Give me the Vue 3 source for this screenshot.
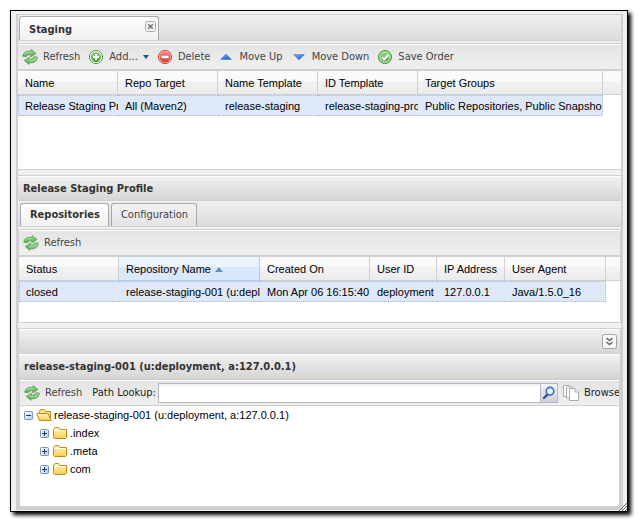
<script setup>
import { ref } from 'vue'

const profileColumns = ['Name', 'Repo Target', 'Name Template', 'ID Template', 'Target Groups']
const profiles = [
  ['Release Staging Profile', 'All (Maven2)', 'release-staging', 'release-staging-profile', 'Public Repositories, Public Snapshots'],
]

const repoColumns = ['Status', 'Repository Name', 'Created On', 'User ID', 'IP Address', 'User Agent']
const repos = [
  ['closed', 'release-staging-001 (u:deployment, a:127.0.0.1)', 'Mon Apr 06 16:15:40', 'deployment', '127.0.0.1', 'Java/1.5.0_16'],
]

const folders = ['.index', '.meta', 'com']
const open = ref(true)
const path = ref('')
</script>

<template>
  <svg class="defs" aria-hidden="true">
    <defs>
      <linearGradient id="g-green" x1="0" y1="0" x2="0" y2="1">
        <stop offset="0" stop-color="#9ad48c" /><stop offset="1" stop-color="#4fa845" />
      </linearGradient>
      <linearGradient id="g-red" x1="0" y1="0" x2="0" y2="1">
        <stop offset="0" stop-color="#f08a80" /><stop offset="1" stop-color="#d43a30" />
      </linearGradient>
      <linearGradient id="g-blue" x1="0" y1="0" x2="1" y2="1">
        <stop offset="0" stop-color="#7db0f5" /><stop offset="1" stop-color="#1c4fc4" />
      </linearGradient>
      <linearGradient id="g-folder" x1="0" y1="0" x2="0" y2="1">
        <stop offset="0" stop-color="#fff6c0" /><stop offset="1" stop-color="#f7ce52" />
      </linearGradient>
      <linearGradient id="g-box" x1="0" y1="0" x2="1" y2="1">
        <stop offset="0" stop-color="#ffffff" /><stop offset="1" stop-color="#b9cbe3" />
      </linearGradient>
      <symbol id="i-refresh" viewBox="0 0 16 16">
        <path d="M.8 7.4 C1.2 3.4 4.6 1.6 9 2.4 L9.2 .6 L14 4.4 L8.8 8 L8.8 6 C6.8 5.4 5.2 5.8 4.6 7.6 Z" fill="url(#g-green)" stroke="#4c9a4a" stroke-width=".7" stroke-linejoin="round" />
        <path d="M15.4 8 C15 12.6 11.4 14.4 7.2 13.6 L7 15.4 L2.2 11.6 L7.4 8 L7.3 10 C9.4 10.6 11 10 11.7 7.8 Z" fill="url(#g-green)" stroke="#4c9a4a" stroke-width=".7" stroke-linejoin="round" />
        <path d="M2.5 5.8 C3.8 3.8 6 3.2 9.6 3.9 M13.9 9.4 C12.6 11.8 10 12.4 6.6 11.6" fill="none" stroke="#c6ecbf" stroke-width=".8" />
      </symbol>
      <symbol id="i-add" viewBox="0 0 16 16">
        <circle cx="8" cy="8" r="6.6" fill="#fff" stroke="#4da048" stroke-width="1" />
        <circle cx="8" cy="8" r="5.2" fill="url(#g-green)" />
        <path d="M8 5v6M5 8h6" stroke="#fff" stroke-width="2" />
      </symbol>
      <symbol id="i-delete" viewBox="0 0 16 16">
        <circle cx="8" cy="8" r="6.6" fill="#f6b5ae" stroke="#d8453b" stroke-width="1" />
        <circle cx="8" cy="8" r="5.4" fill="url(#g-red)" />
        <path d="M4.5 8h7" stroke="#fff" stroke-width="2.4" />
      </symbol>
      <symbol id="i-save" viewBox="0 0 16 16">
        <circle cx="8" cy="8" r="6.6" fill="#8fce83" stroke="#4da048" stroke-width="1" />
        <circle cx="8" cy="8" r="5" fill="url(#g-green)" stroke="#d8f2d2" stroke-width=".6" />
        <path d="M5 8.2l2.2 2.2L11.2 6" fill="none" stroke="#fff" stroke-width="2" />
      </symbol>
      <symbol id="i-up" viewBox="0 0 16 16">
        <path d="M8 5L13.4 10.5H2.6Z" fill="url(#g-blue)" stroke="#3c6fd6" stroke-width=".5" />
      </symbol>
      <symbol id="i-down" viewBox="0 0 16 16">
        <path d="M2.6 5.5H13.4L8 11Z" fill="url(#g-blue)" stroke="#3c6fd6" stroke-width=".5" />
      </symbol>
      <symbol id="i-folder" viewBox="0 0 16 16">
        <path d="M1.5 12.5V4.5L3 2.5H6.6L8 4.5H14.5V12.5L13.5 13.5H2.5Z" fill="url(#g-folder)" stroke="#c48a1e" />
        <path d="M2.5 6.5V5.5H13.5" fill="none" stroke="#fffbe0" />
      </symbol>
      <symbol id="i-folder-open" viewBox="0 0 16 16">
        <path d="M3.5 13.5V4.2L4.5 2.5H8.2L9.5 4.5H14.5V13.5Z" fill="#fbe48a" stroke="#c48a1e" />
        <path d="M.8 6.5H12.2L15.2 13.5H3.4Z" fill="url(#g-folder)" stroke="#c48a1e" stroke-linejoin="round" />
      </symbol>
      <symbol id="i-pages" viewBox="0 0 16 16">
        <g fill="#fff" stroke="#a4a4a4" stroke-width=".9">
          <path d="M.5 .5H6L8 2.5V11.5H.5Z" />
          <path d="M3.5 2H9L11 4V13H3.5Z" />
          <path d="M6.5 3.5H12L15.5 7V15.5H6.5Z" />
          <path d="M12 3.5V7H15.5" />
        </g>
      </symbol>
      <symbol id="i-minus" viewBox="0 0 9 9">
        <rect x=".5" y=".5" width="8" height="8" rx="1" fill="url(#g-box)" stroke="#7b93b5" />
        <path d="M2 4.5h5" stroke="#1f3a66" />
      </symbol>
      <symbol id="i-plus" viewBox="0 0 9 9">
        <rect x=".5" y=".5" width="8" height="8" rx="1" fill="url(#g-box)" stroke="#7b93b5" />
        <path d="M2 4.5h5M4.5 2v5" stroke="#1f3a66" />
      </symbol>
    </defs>
  </svg>

  <div class="page">
    <div class="window">
      <main class="panel">
        <div class="strip" role="tablist">
          <div class="tab active closable">
            <button class="tab-label" role="tab" aria-selected="true">Staging</button>
            <button class="close" aria-label="Close">
              <svg viewBox="0 0 11 11"><rect x=".5" y=".5" width="10" height="10" rx="2" fill="#f4f4f4" stroke="#a8a8a8" /><path d="M3.2 3.2l4.6 4.6M7.8 3.2l-4.6 4.6" stroke="#777" stroke-width="1.6" /></svg>
            </button>
          </div>
        </div>
        <div class="base"></div>

        <div class="toolbar thick">
          <button class="tool"><svg class="icon"><use href="#i-refresh" /></svg>Refresh</button>
          <button class="tool"><svg class="icon"><use href="#i-add" /></svg>Add...<svg class="caret" viewBox="0 0 6 4"><path d="M0 0H6L3 4Z" fill="#1f4f8f" /></svg></button>
          <button class="tool"><svg class="icon"><use href="#i-delete" /></svg>Delete</button>
          <button class="tool"><svg class="icon"><use href="#i-up" /></svg>Move Up</button>
          <button class="tool"><svg class="icon"><use href="#i-down" /></svg>Move Down</button>
          <button class="tool"><svg class="icon"><use href="#i-save" /></svg>Save Order</button>
        </div>

        <div class="grid profiles">
          <table>
            <colgroup>
              <col class="w100" /><col class="w100" /><col class="w100" /><col class="w100" /><col /><col class="w18" />
            </colgroup>
            <thead>
              <tr><th v-for="c in profileColumns" :key="c" scope="col">{{ c }}</th><td class="filler"></td></tr>
            </thead>
            <tbody>
              <tr v-for="row in profiles" :key="row[0]"><td v-for="(v, i) in row" :key="i">{{ v }}</td><td class="filler"></td></tr>
            </tbody>
          </table>
        </div>

        <div class="splitter"></div>
        <h2 class="title">Release Staging Profile</h2>
        <div class="strip inner" role="tablist">
          <button class="tab active" role="tab" aria-selected="true">Repositories</button>
          <button class="tab" role="tab" aria-selected="false">Configuration</button>
        </div>
        <div class="base"></div>

        <section class="inset">
          <div class="toolbar thick">
            <button class="tool"><svg class="icon"><use href="#i-refresh" /></svg>Refresh</button>
          </div>
          <div class="grid repos">
            <table>
              <colgroup>
                <col class="w100" /><col class="w141" /><col class="w110" /><col class="w67" /><col class="w68" /><col /><col class="w14" />
              </colgroup>
              <thead>
                <tr>
                  <th v-for="c in repoColumns" :key="c" scope="col" :class="{ sorted: c === 'Repository Name' }">{{ c }}<svg v-if="c === 'Repository Name'" class="sort" viewBox="0 0 8 5"><path d="M4 0L8 5H0Z" fill="#5d8fd0" /></svg></th>
                  <td class="filler"></td>
                </tr>
              </thead>
              <tbody>
                <tr v-for="row in repos" :key="row[1]"><td v-for="(v, i) in row" :key="i">{{ v }}</td><td class="filler"></td></tr>
              </tbody>
            </table>
          </div>
        </section>

        <div class="splitter"></div>
        <section class="inset grow">
          <div class="title bar">
            <button class="collapse" aria-label="Collapse">
              <svg viewBox="0 0 15 15"><rect x=".5" y=".5" width="14" height="14" rx="2" fill="#f8f8f8" stroke="#a3a3a3" /><path d="M4.5 4L7.5 6.6L10.5 4M4.5 8L7.5 10.6L10.5 8" fill="none" stroke="#666" stroke-width="1.5" /></svg>
            </button>
          </div>
          <h2 class="title last">release-staging-001 (u:deployment, a:127.0.0.1)</h2>
          <div class="inset grow">
            <div class="toolbar lookup">
              <button class="tool"><svg class="icon"><use href="#i-refresh" /></svg>Refresh</button>
              <label for="path">Path Lookup:</label>
              <div class="search">
                <input id="path" v-model="path" type="text" />
                <button class="find" aria-label="Search">
                  <svg viewBox="0 0 16 18"><path d="M6.6 10.4L3 14" stroke="#2a5298" stroke-width="2.4" stroke-linecap="round" /><circle cx="9" cy="7.2" r="3.8" fill="#e6f1fd" stroke="#3a6cc0" stroke-width="1.6" /></svg>
                </button>
              </div>
              <button class="tool browse"><svg class="icon"><use href="#i-pages" /></svg>Browse</button>
            </div>
            <ul class="tree">
              <li>
                <button class="node" :aria-expanded="open" @click="open = !open">
                  <svg class="elbow"><use :href="open ? '#i-minus' : '#i-plus'" /></svg>
                  <svg class="icon"><use href="#i-folder-open" /></svg>
                  <span>release-staging-001 (u:deployment, a:127.0.0.1)</span>
                </button>
                <ul v-if="open">
                  <li v-for="f in folders" :key="f">
                    <button class="node" aria-expanded="false">
                      <svg class="elbow"><use href="#i-plus" /></svg>
                      <svg class="icon"><use href="#i-folder" /></svg>
                      <span>{{ f }}</span>
                    </button>
                  </li>
                </ul>
              </li>
            </ul>
          </div>
        </section>
      </main>
      <svg class="grip" viewBox="0 0 8 8"><path d="M0 8L8 0M3 8L8 3M6 8L8 6" stroke="#666" stroke-width="1" /></svg>
    </div>
  </div>
</template>

<style>
body { margin: 0; background: #fff; }
</style>

<style scoped>
* { box-sizing: border-box; }
.defs { position: absolute; width: 0; height: 0; }
.page {
  display: flex;
  min-height: 100vh;
  padding: 10px;
  font: 11px/14px "Liberation Sans", Arial, sans-serif;
  color: #000;
}
.window {
  position: relative;
  display: flex;
  flex: 1;
  min-width: 0;
  padding: 3px 4px 1px 5px;
  border: 1px solid #000;
  background: #f0f0f0;
  box-shadow: 3px 3px 4px #000;
}
.panel {
  display: flex;
  flex: 1;
  flex-direction: column;
  min-width: 0;
  border: solid #d0d0d0;
  border-width: 1px 2px 4px;
}
button {
  margin: 0;
  padding: 0;
  border: 0;
  background: none;
  font: inherit;
  color: inherit;
  white-space: nowrap;
}
svg { display: block; flex: none; }

.strip, .toolbar, .title, .tab {
  font-family: "DejaVu Sans Condensed", "DejaVu Sans", sans-serif;
}
.strip {
  display: flex;
  align-items: flex-end;
  gap: 2px;
  height: 25px;
  padding: 0 1px;
  background: linear-gradient(#efefef, #dcdcdc);
}
.strip.inner { padding: 0 2px; }
.tab {
  height: 23px;
  padding: 0 8px 0 9px;
  border: 1px solid #a8a8a8;
  border-bottom: 0;
  border-radius: 3px 3px 0 0;
  background: linear-gradient(#f2f2f2, #e4e4e4);
  color: #444;
}
.tab.active {
  background: linear-gradient(#fff, #f0f0f0);
  font-weight: bold;
  color: #333;
}
.tab.closable {
  display: flex;
  justify-content: space-between;
  width: 140px;
  height: 24px;
  padding: 4px 2px 0 9px;
}
.tab-label { height: 18px; }
.close { width: 11px; height: 11px; }
.base {
  height: 4px;
  border: solid #d0d0d0;
  border-width: 1px 0;
  background: #f0f0f0;
}

.toolbar {
  display: flex;
  align-items: center;
  gap: 8px;
  height: 26px;
  padding: 0 4px;
  border-top: 1px solid #fff;
  border-bottom: 1px solid #d0d0d0;
  background: linear-gradient(#e4e4e4, #f0f0f0);
  color: #444;
}
.toolbar.thick { height: 27px; border-bottom-width: 2px; }
.tool { display: flex; align-items: center; gap: 5px; }
.icon { width: 16px; height: 16px; }
.caret { width: 6px; height: 4px; }

.grid { background: #fff; }
.profiles { min-height: 98px; }
.repos { min-height: 65px; }
table { width: 100%; table-layout: fixed; border-collapse: separate; border-spacing: 0; }
.w100 { width: 100px; }
.w18 { width: 18px; }
.w141 { width: 141px; }
.w110 { width: 110px; }
.w67 { width: 67px; }
.w68 { width: 68px; }
.w14 { width: 14px; }
th, td {
  padding: 0 0 0 7px;
  overflow: hidden;
  font-weight: normal;
  text-align: left;
  white-space: nowrap;
}
th, thead .filler {
  height: 24px;
  border-bottom: 1px solid #d0d0d0;
  background: linear-gradient(#fafafa 0 45%, #f2f2f2 45%, #ebebeb);
}
th { border-right: 1px solid #d0d0d0; }
th.sorted {
  border-color: #aaccf6;
  background: linear-gradient(#ebf3fd 0 45%, #d9e8fb 45%);
}
.sort { display: inline-block; width: 8px; height: 5px; margin-left: 4px; vertical-align: 1px; }
tbody td {
  height: 21px;
  border: dotted #a3bae9;
  border-width: 1px 0;
  background: #dfe8f6;
}
tbody td:first-child { padding-left: 6px; border-left-width: 1px; }
tbody td:nth-last-child(2) { border-right-width: 1px; }
tbody .filler { border: 0; background: #fff; }

.splitter {
  height: 7px;
  border: solid #d0d0d0;
  border-width: 1px 0;
  background: #f0f0f0;
}
.title {
  height: 25px;
  margin: 0;
  padding: 0 5px;
  border-top: 1px solid #fff;
  border-bottom: 1px solid #d0d0d0;
  background: linear-gradient(#f0f0f0, #d6d6d6);
  font-size: 11px;
  line-height: 24px;
  font-weight: bold;
  color: #333;
}
.title.last { height: 26px; border-bottom-width: 2px; }
.bar { display: flex; align-items: center; justify-content: flex-end; padding: 0 3px; }
.collapse { width: 15px; height: 15px; }
.inset { border: solid #d0d0d0; border-width: 0 1px; }
.grow { display: flex; flex: 1; flex-direction: column; }

.lookup { gap: 10px; padding-right: 0; }
.lookup label { color: #222; }
.search { display: flex; flex: 1; min-width: 0; height: 20px; margin-left: -8px; border: 1px solid #b5b8c8; }
.search input {
  flex: 1;
  min-width: 0;
  padding: 0 3px;
  border: 0;
  outline: 0;
  background: linear-gradient(#eee, #fff 4px);
  font: inherit;
}
.find { width: 17px; border-left: 1px solid #b5b8c8; background: linear-gradient(#f4f4f4, #ccd0d8); }
.find svg { width: 16px; height: 18px; }
.browse { width: 56px; margin-left: -5px; overflow: hidden; color: #222; }

.tree { flex: 1; background: #fff; }
ul { margin: 0; padding: 0; list-style: none; }
.tree ul { padding-left: 16px; }
.node { display: flex; align-items: center; height: 18px; }
.elbow { width: 9px; height: 9px; margin: 0 3px 0 4px; }
.node span { margin-left: 2px; }
.grip { position: absolute; right: 0; bottom: 0; width: 8px; height: 8px; }
</style>
